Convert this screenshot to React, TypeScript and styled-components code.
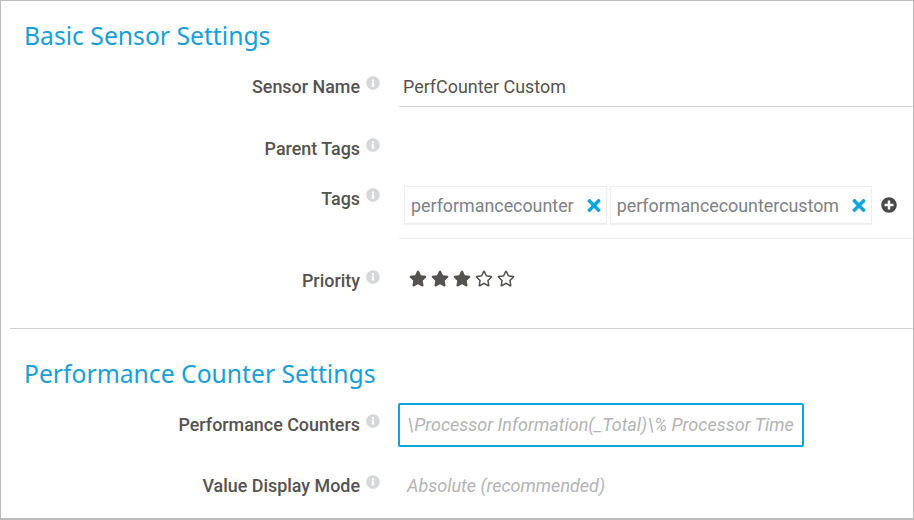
import styled, { createGlobalStyle } from "styled-components";
import { FaInfoCircle, FaPlusCircle, FaRegStar, FaStar, FaTimes } from "react-icons/fa";

const GlobalStyle = createGlobalStyle`
  html, body {
    margin: 0;
    padding: 0;
    background: #fff;
  }
  * {
    box-sizing: border-box;
  }
`;

const Panel = styled.div`
  width: 914px;
  height: 520px;
  overflow: hidden;
  background: #fff;
  border: 1px solid #bdbdbd;
  border-width: 1px 1px 2px 1px;
  font-family: Roboto, "Liberation Sans", sans-serif;
`;

const Heading = styled.h2<{ $top: number }>`
  margin: 0;
  padding: ${props => props.$top}px 0 0 23px;
  height: ${props => props.$top + 34}px;
  font-family: "Noto Sans", "Open Sans", sans-serif;
  font-size: 24.7px;
  line-height: 34px;
  font-weight: 400;
  color: #179fd8;
`;

const Row = styled.div<{ $height: number }>`
  display: grid;
  grid-template-columns: 398px 1fr;
  height: ${props => props.$height}px;
`;

const LabelCell = styled.div<{ $top: number }>`
  display: flex;
  justify-content: flex-end;
  padding: ${props => props.$top}px 19px 0 0;
  height: 100%;
`;

const Label = styled.label`
  font-size: 17.9px;
  line-height: 22px;
  font-weight: 500;
  color: #555350;
`;

const Info = styled(FaInfoCircle)`
  width: 14px;
  height: 14px;
  margin: 0 0 0 6px;
  color: #d5d7d9;
`;

const ValueCell = styled.div<{ $line?: string; $top?: number }>`
  height: 100%;
  padding-top: ${props => props.$top ?? 0}px;
  border-bottom: ${props => (props.$line ? `1px solid ${props.$line}` : "none")};
`;

const TextValue = styled.div`
  padding: 0 0 0 4px;
  font-size: 17.9px;
  line-height: 22px;
  color: #555350;
`;

const Tags = styled.div`
  display: flex;
  align-items: center;
  gap: 3px;
  padding: 0 0 0 5px;
  height: 38px;
`;

const Tag = styled.div`
  display: flex;
  align-items: center;
  height: 38px;
  padding: 0 5px 0 6px;
  border: 1px solid #eeeeee;
  box-shadow: 0 1px 1px rgba(0, 0, 0, 0.06);
  font-size: 17.85px;
  color: #7d8286;
`;

const Remove = styled(FaTimes)`
  width: 14px;
  height: 19px;
  margin-left: 13px;
  color: #0ea5dc;
`;

const Add = styled(FaPlusCircle)`
  width: 16px;
  height: 16px;
  margin-left: 6px;
  color: #4a4a4a;
`;

const Stars = styled.div`
  display: flex;
  gap: 4px;
  padding: 31px 0 0 10px;
  color: #555350;
`;

const Star = styled.span`
  display: flex;
  width: 18px;
  height: 18px;
  svg {
    width: 18px;
    height: 17px;
  }
`;

const Divider = styled.hr`
  margin: 0 0 0 9px;
  border: 0;
  border-top: 1px solid #d2d2d2;
`;

const Counter = styled.div`
  width: 406px;
  height: 44px;
  margin-left: -1px;
  padding: 0 0 0 7px;
  border: 2px solid #0ea5dc;
  border-radius: 2px;
  font-size: 18px;
  line-height: 40px;
  font-style: italic;
  color: #b4b4b4;
  white-space: nowrap;
  overflow: hidden;
`;

const Placeholder = styled.div`
  padding: 18px 0 0 8px;
  font-size: 18px;
  line-height: 22px;
  font-style: italic;
  color: #b4b4b4;
`;

function FieldLabel({ text, top }: { text: string; top: number }) {
  return (
    <LabelCell $top={top}>
      <Label>{text}</Label>
      <Info />
    </LabelCell>
  );
}

function App() {
  return (
    <>
      <GlobalStyle />
      <Panel>
        <Heading $top={18}>Basic Sensor Settings</Heading>
        <Row $height={54}>
          <FieldLabel text="Sensor Name" top={23} />
          <ValueCell $line="#d8d8d8" $top={23}>
            <TextValue>PerfCounter Custom</TextValue>
          </ValueCell>
        </Row>
        <Row $height={79}>
          <FieldLabel text="Parent Tags" top={31} />
          <ValueCell />
        </Row>
        <Row $height={53}>
          <FieldLabel text="Tags" top={2} />
          <ValueCell $line="#eeeeee">
            <Tags>
              <Tag>
                performancecounter
                <Remove />
              </Tag>
              <Tag>
                performancecountercustom
                <Remove />
              </Tag>
              <Add />
            </Tags>
          </ValueCell>
        </Row>
        <Row $height={89}>
          <FieldLabel text="Priority" top={31} />
          <Stars>
            <Star><FaStar /></Star>
            <Star><FaStar /></Star>
            <Star><FaStar /></Star>
            <Star><FaRegStar /></Star>
            <Star><FaRegStar /></Star>
          </Stars>
        </Row>
        <Divider />
        <Heading $top={28}>Performance Counter Settings</Heading>
        <Row $height={66}>
          <FieldLabel text="Performance Counters" top={23} />
          <ValueCell $top={12}>
            <Counter>\Processor Information(_Total)\% Processor Time</Counter>
          </ValueCell>
        </Row>
        <Row $height={40}>
          <FieldLabel text="Value Display Mode" top={18} />
          <Placeholder>Absolute (recommended)</Placeholder>
        </Row>
      </Panel>
    </>
  );
}

export default App;
